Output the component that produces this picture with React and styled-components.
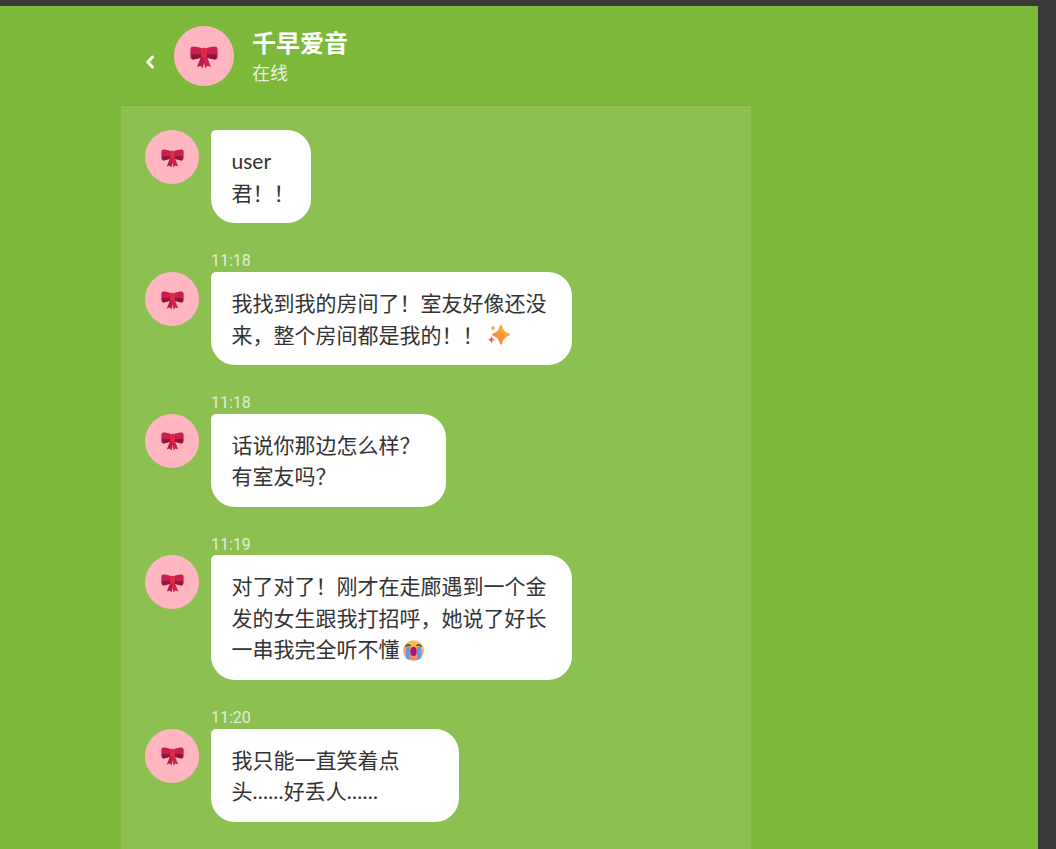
import React from "react";
import styled, { createGlobalStyle } from "styled-components";

const GlobalStyle = createGlobalStyle`
  html, body {
    margin: 0;
    padding: 0;
    height: 100%;
    overflow: hidden;
    background: #3a3a3a;
  }
`;

const Page = styled.div`
  width: 1038px;
  height: 843px;
  margin-top: 6px;
  padding-left: 121px;
  box-sizing: border-box;
  overflow: hidden;
  background: #7cb839;
  font-family: "Lato", "Noto Sans CJK SC", sans-serif;
`;

const Panel = styled.div`
  width: 630px;
`;

const Header = styled.header`
  display: flex;
  align-items: center;
  height: 100px;
  box-sizing: border-box;
  padding-left: 24px;
  border-bottom: 1px solid #77b237;
  color: #fff;
`;

const Back = styled.span`
  width: 29px;
  display: flex;
  margin-top: 12px;
`;

const Avatar = styled.div`
  flex: none;
  width: ${(p) => p.$size}px;
  height: ${(p) => p.$size}px;
  border-radius: 50%;
  background: #ffb6c1;
  display: flex;
  align-items: center;
  justify-content: center;
`;

const HeaderText = styled.div`
  margin-left: 18px;
  display: flex;
  flex-direction: column;
`;

const Name = styled.div`
  font-size: 24px;
  line-height: 34px;
  font-weight: 700;
`;

const Status = styled.div`
  font-size: 18px;
  line-height: 26px;
  color: rgba(255, 255, 255, 0.85);
`;

const Messages = styled.div`
  background: #8cc152;
  padding: 24.4px 0 0 24px;
  height: 760px;
  display: flex;
  flex-direction: column;
`;

const Row = styled.div`
  display: flex;
  gap: 12px;
  align-items: flex-start;
`;

const Column = styled.div`
  display: flex;
  flex-direction: column;
  align-items: flex-start;
`;

const Bubble = styled.div`
  width: ${(p) => p.$width}px;
  box-sizing: border-box;
  padding: 15px 0 15px 20.5px;
  background: #fff;
  border-radius: 5px 24px 24px 24px;
  color: #333;
  font-size: 21px;
  line-height: 31.5px;
  white-space: nowrap;
`;

const Dots = styled.span`
  letter-spacing: 0.26px;
`;

const Time = styled.div`
  margin-top: 28px;
  height: 20.67px;
  font-family: "Roboto", sans-serif;
  font-size: 16px;
  line-height: 20px;
  color: rgba(255, 255, 255, 0.75);
`;

const Emoji = styled.svg`
  display: inline-block;
  vertical-align: ${(p) => p.$align}px;
  margin-left: ${(p) => p.$left}px;
`;

const ChevronIcon = () => (
  <svg width="10" height="14" viewBox="0 0 10 14" fill="none">
    <path d="M7.500 2 2.800 7l4.700 5" stroke="#fff" strokeWidth="3" strokeLinecap="round" strokeLinejoin="round" />
  </svg>
);

const BowIcon = ({ size }) => (
  <svg width={size} height={size} viewBox="0 0 32 32">
    <path d="M13 16 8 28.500l4-1.500 2.500 3 3-13z" fill="#b81a48" />
    <path d="M19 16l5 12.500-4-1.500-2.500 3-3-13z" fill="#d0214f" />
    <path d="M13.500 7C10 5.800 6.500 5 3.500 5 1.500 5 .5 6.300.5 8.500v8c0 2.600 1.300 3.800 3.300 3.500 3.700-.5 7.200-1.400 9.700-2.500z" fill="#c81e50" />
    <path d="M18.500 7c3.500-1.200 7-2 10-2 2 0 3 1.300 3 3.500v8c0 2.600-1.300 3.800-3.300 3.500-3.700-.5-7.200-1.400-9.700-2.500z" fill="#c81e50" />
    <path d="M1.500 13.500c4 1.300 8.500 1 12-.5v4.500c-2.500 1.100-6 2-9.700 2.500-1.600.2-2.300-3.500-2.300-6.500z" fill="#8e1539" />
    <path d="M30.500 13.500c-4 1.300-8.500 1-12-.5v4.500c2.500 1.100 6 2 9.700 2.500 1.600.2 2.300-3.500 2.300-6.500z" fill="#8e1539" />
    <rect x="12.500" y="6.500" width="7" height="11.500" rx="2.500" fill="#e02a45" />
  </svg>
);

const SparklesIcon = () => (
  <Emoji $align={-4} $left={-3} width="24" height="24" viewBox="0 0 24 24">
    <defs>
      <linearGradient id="spark" x1="1" y1="0" x2="0" y2="1">
        <stop offset="0" stopColor="#ffc233" />
        <stop offset="1" stopColor="#f5733a" />
      </linearGradient>
    </defs>
    <path d="M15 1.500c.8 0 1.100 1.200 1.900 3.500.8 2.400 2 3.700 4.500 4.800 1.800.8 2.600 1.100 2.600 1.800s-.8 1-2.600 1.800c-2.500 1.100-3.700 2.400-4.500 4.800-.8 2.300-1.100 3.500-1.900 3.500s-1.100-1.200-1.900-3.500c-.8-2.400-2-3.700-4.500-4.800C6.800 12.600 6 12.300 6 11.600s.8-1 2.600-1.800c2.500-1.100 3.700-2.400 4.500-4.800.8-2.300 1.100-3.500 1.900-3.500z" fill="url(#spark)" />
    <path d="M5.500 12.500c.5 2.600 1 3.400 3.800 4.200-2.800.8-3.300 1.600-3.800 4.200-.5-2.600-1-3.400-3.800-4.200 2.800-.8 3.300-1.600 3.800-4.200z" fill="#f56c40" />
    <path d="M7 1.500c.4 2.200.8 2.800 2.700 3.500C7.800 5.700 7.400 6.300 7 8.500 6.600 6.300 6.200 5.700 4.300 5 6.200 4.300 6.600 3.700 7 1.500z" fill="#ffa83a" />
  </Emoji>
);

const CryingIcon = () => (
  <Emoji $align={-4} $left={3} width="21" height="21" viewBox="0 0 22 22">
    <defs>
      <linearGradient id="cry" x1="0" y1="0" x2="0" y2="1">
        <stop offset="0" stopColor="#fcc44a" />
        <stop offset="1" stopColor="#f2856f" />
      </linearGradient>
    </defs>
    <circle cx="11" cy="11" r="10.800" fill="url(#cry)" />
    <path d="M3.500 7 2.800 18.500c1.200 1.200 2.800 2 4.200 2.400L7.500 7z" fill="#5a9bf0" />
    <path d="M18.500 7l.7 11.500c-1.200 1.200-2.800 2-4.200 2.400L14.500 7z" fill="#5a9bf0" />
    <path d="M3.200 6.500c1-1.500 2.600-1.800 4.300-.7M18.800 6.500c-1-1.500-2.600-1.800-4.300-.7" stroke="#4a3a4a" strokeWidth="1.500" fill="none" strokeLinecap="round" />
    <ellipse cx="11" cy="12" rx="3.300" ry="4.800" fill="#a3177e" />
  </Emoji>
);

const messages = [
  { width: 100, lines: ["user", "君！！"], time: "11:18" },
  { width: 361, lines: ["我找到我的房间了！室友好像还没", <>来，整个房间都是我的！！ <SparklesIcon /></>], time: "11:18" },
  { width: 235, lines: ["话说你那边怎么样？", "有室友吗？"], time: "11:19" },
  { width: 361, lines: ["对了对了！刚才在走廊遇到一个金", "发的女生跟我打招呼，她说了好长", <>一串我完全听不懂<CryingIcon /></>], time: "11:20" },
  { width: 248, lines: ["我只能一直笑着点", <>头<Dots>......</Dots>好丢人<Dots>......</Dots></>] },
];

const App = () => (
  <Page>
    <GlobalStyle />
    <Panel>
      <Header>
        <Back>
          <ChevronIcon />
        </Back>
        <Avatar $size={60}>
          <BowIcon size={28} />
        </Avatar>
        <HeaderText>
          <Name>千早爱音</Name>
          <Status>在线</Status>
        </HeaderText>
      </Header>
      <Messages>
        {messages.map((m, i) => (
          <Row key={i}>
            <Avatar $size={54}>
              <BowIcon size={23} />
            </Avatar>
            <Column>
              <Bubble $width={m.width}>
                {m.lines.map((line, j) => (
                  <div key={j}>{line}</div>
                ))}
              </Bubble>
              {m.time && <Time>{m.time}</Time>}
            </Column>
          </Row>
        ))}
      </Messages>
    </Panel>
  </Page>
);

export default App;
